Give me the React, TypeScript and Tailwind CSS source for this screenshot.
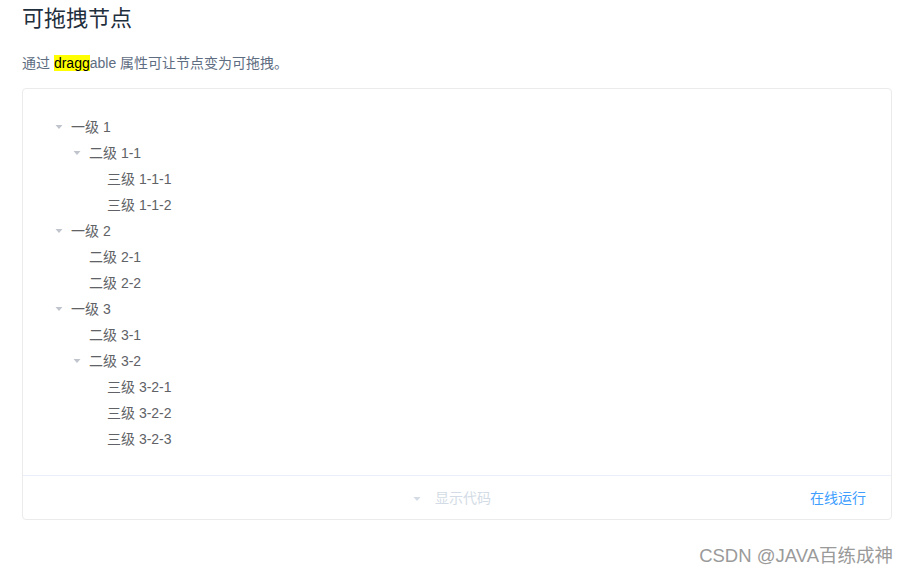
import React from 'react';

interface TreeNode {
  label: string;
  children?: TreeNode[];
}

const DATA: TreeNode[] = [
  {
    label: '一级 1',
    children: [{ label: '二级 1-1', children: [{ label: '三级 1-1-1' }, { label: '三级 1-1-2' }] }],
  },
  {
    label: '一级 2',
    children: [{ label: '二级 2-1' }, { label: '二级 2-2' }],
  },
  {
    label: '一级 3',
    children: [
      { label: '二级 3-1' },
      { label: '二级 3-2', children: [{ label: '三级 3-2-1' }, { label: '三级 3-2-2' }, { label: '三级 3-2-3' }] },
    ],
  },
];

const Caret = ({ color }: { color: string }) => (
  <svg width="12" height="12" viewBox="0 0 12 12">
    <path d="M2.5 4 L9.5 4 L6 8 Z" fill={color} />
  </svg>
);

const Node = ({ node, level }: { node: TreeNode; level: number }) => {
  const hasKids = !!node.children && node.children.length > 0;
  return (
    <div>
      <div className="flex items-center h-[26px]" style={{ paddingLeft: level * 18 }}>
        <span className="w-[24px] flex justify-center">{hasKids && <Caret color="#c0c4cc" />}</span>
        <span className="text-[14px] text-[#606266]">{node.label}</span>
      </div>
      {hasKids && node.children!.map((c) => <Node key={c.label} node={c} level={level + 1} />)}
    </div>
  );
};

export default function App() {
  return (
    <div
      className="w-[907px] h-[574px] bg-white relative pl-[22px]"
      style={{ fontFamily: '"Liberation Sans", "Noto Sans CJK SC", sans-serif' }}
    >
      <h3 className="text-[22px] leading-[30px] pt-[4px] text-[#1f2f3d] font-normal">可拖拽节点</h3>
      <p className="mt-[19px] text-[14px] leading-[20px] text-[#5e6d82]">
        通过 <span className="bg-[#ffff00] text-black">dragg</span>able 属性可让节点变为可拖拽。
      </p>

      <div className="mt-[15px] w-[870px] border border-[#ebebeb] rounded-[4px]">
        <div className="pt-[25px] pb-[23px] px-[24px]">
          {DATA.map((n) => (
            <Node key={n.label} node={n} level={0} />
          ))}
        </div>
        <div className="h-[44px] pt-[2px] border-t border-[#eaeefb] flex items-center relative">
          <div className="flex-1 flex justify-center items-center gap-[12px] pr-[12px]">
            <Caret color="#d3dce6" />
            <span className="text-[14px] text-[#d3dce6]">显示代码</span>
          </div>
          <span className="absolute right-[25px] text-[14px] text-[#409eff]">在线运行</span>
        </div>
      </div>

      <div className="absolute right-[14px] top-[542px] text-[18.5px] text-[#9a9a9a] leading-[28px]">
        CSDN @JAVA百练成神
      </div>
    </div>
  );
}
